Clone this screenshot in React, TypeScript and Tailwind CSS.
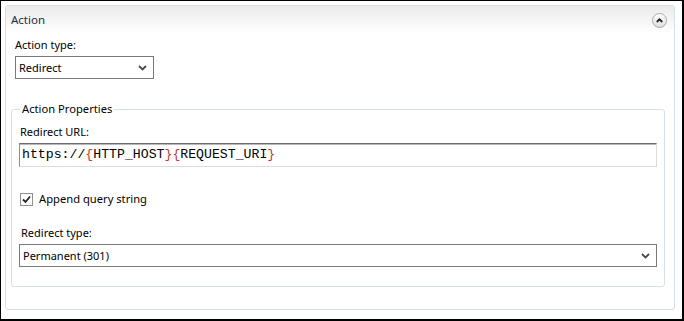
import React from 'react';

const ui = "font-['Segoe_UI','Noto_Sans',sans-serif] text-[11px] leading-[16px]";

const Chevron: React.FC = () => (
  <svg width="9" height="6" viewBox="0 0 9 6" className="shrink-0">
    <polyline points="1,1 4.5,4.5 8,1" fill="none" stroke="#4a4a4a" strokeWidth="1.8" />
  </svg>
);

const Select: React.FC<{ value: string; className?: string }> = ({ value, className = '' }) => (
  <div
    className={`flex h-[23px] items-center justify-between border border-[#7a7a7a] bg-white pl-[3px] pr-[6px] text-black ${className}`}
  >
    <span>{value}</span>
    <Chevron />
  </div>
);

const CollapseButton: React.FC = () => (
  <button
    type="button"
    className="flex h-[15px] w-[15px] items-center justify-center rounded-full border border-[#a9a9a9] bg-gradient-to-b from-white to-[#dedede]"
  >
    <svg width="7" height="5" viewBox="0 0 7 5">
      <polyline points="0.8,4 3.5,1.3 6.2,4" fill="none" stroke="#222" strokeWidth="1.8" />
    </svg>
  </button>
);

export default function App() {
  return (
    <div className={`h-[321px] w-[684px] border-t border-l border-r-2 border-b-2 border-black bg-white pl-[4px] pt-[4px] ${ui}`}>
      <div className="flex h-[305px] w-[670px] flex-col rounded-[3px] border border-[#d5dfe5] bg-white">
        {/* Header */}
        <div className="flex h-[28px] items-center justify-between bg-gradient-to-b from-[#ebebeb] to-white pl-[5px] pr-[7px]">
          <span className="text-[11.5px] text-[#1b2b45]">Action</span>
          <CollapseButton />
        </div>

        {/* Action type */}
        <div className="mt-[3px] pl-[9px] text-black">Action type:</div>
        <Select value="Redirect" className="ml-[9px] mt-[3px] w-[139px]" />

        {/* Action Properties */}
        <fieldset className="ml-[5px] mt-[22px] w-[654px] rounded-[3px] border border-[#d5dfe5] px-[7px] pb-[19px]">
          <legend className="ml-[1px] px-[2px] text-[11.2px] text-black">Action Properties</legend>

          <div className="mt-[7px] pl-[1px] text-black">Redirect URL:</div>
          <div className="mt-[3px] flex h-[24px] w-[638px] items-center border border-t-[#6d6d6d] border-l-[#8e8e8e] border-r-[#dcdcdc] border-b-[#dcdcdc] bg-white pl-[2px] shadow-[inset_0_1px_0_#b8b8b8] font-['Liberation_Mono','Courier_New',monospace] text-[13.2px] text-black">
            <span>https://</span>
            <span className="text-[#c0392b]">{'{'}</span>
            <span>HTTP_HOST</span>
            <span className="text-[#c0392b]">{'}{'}</span>
            <span>REQUEST_URI</span>
            <span className="text-[#c0392b]">{'}'}</span>
          </div>

          <label className="mt-[24px] flex items-center gap-[6px] pl-[1px] text-[11.2px] text-black">
            <span className="flex h-[13px] w-[13px] items-center justify-center border border-[#8e8f8f] bg-white">
              <svg width="9" height="9" viewBox="0 0 9 9">
                <polyline points="1,4.5 3.5,7 8,1.5" fill="none" stroke="#222" strokeWidth="1.8" />
              </svg>
            </span>
            Append query string
          </label>

          <div className="mt-[18px] pl-[2px] text-black">Redirect type:</div>
          <Select value="Permanent (301)" className="mt-[3px] w-[638px] pl-[3px]" />
        </fieldset>
      </div>
    </div>
  );
}
